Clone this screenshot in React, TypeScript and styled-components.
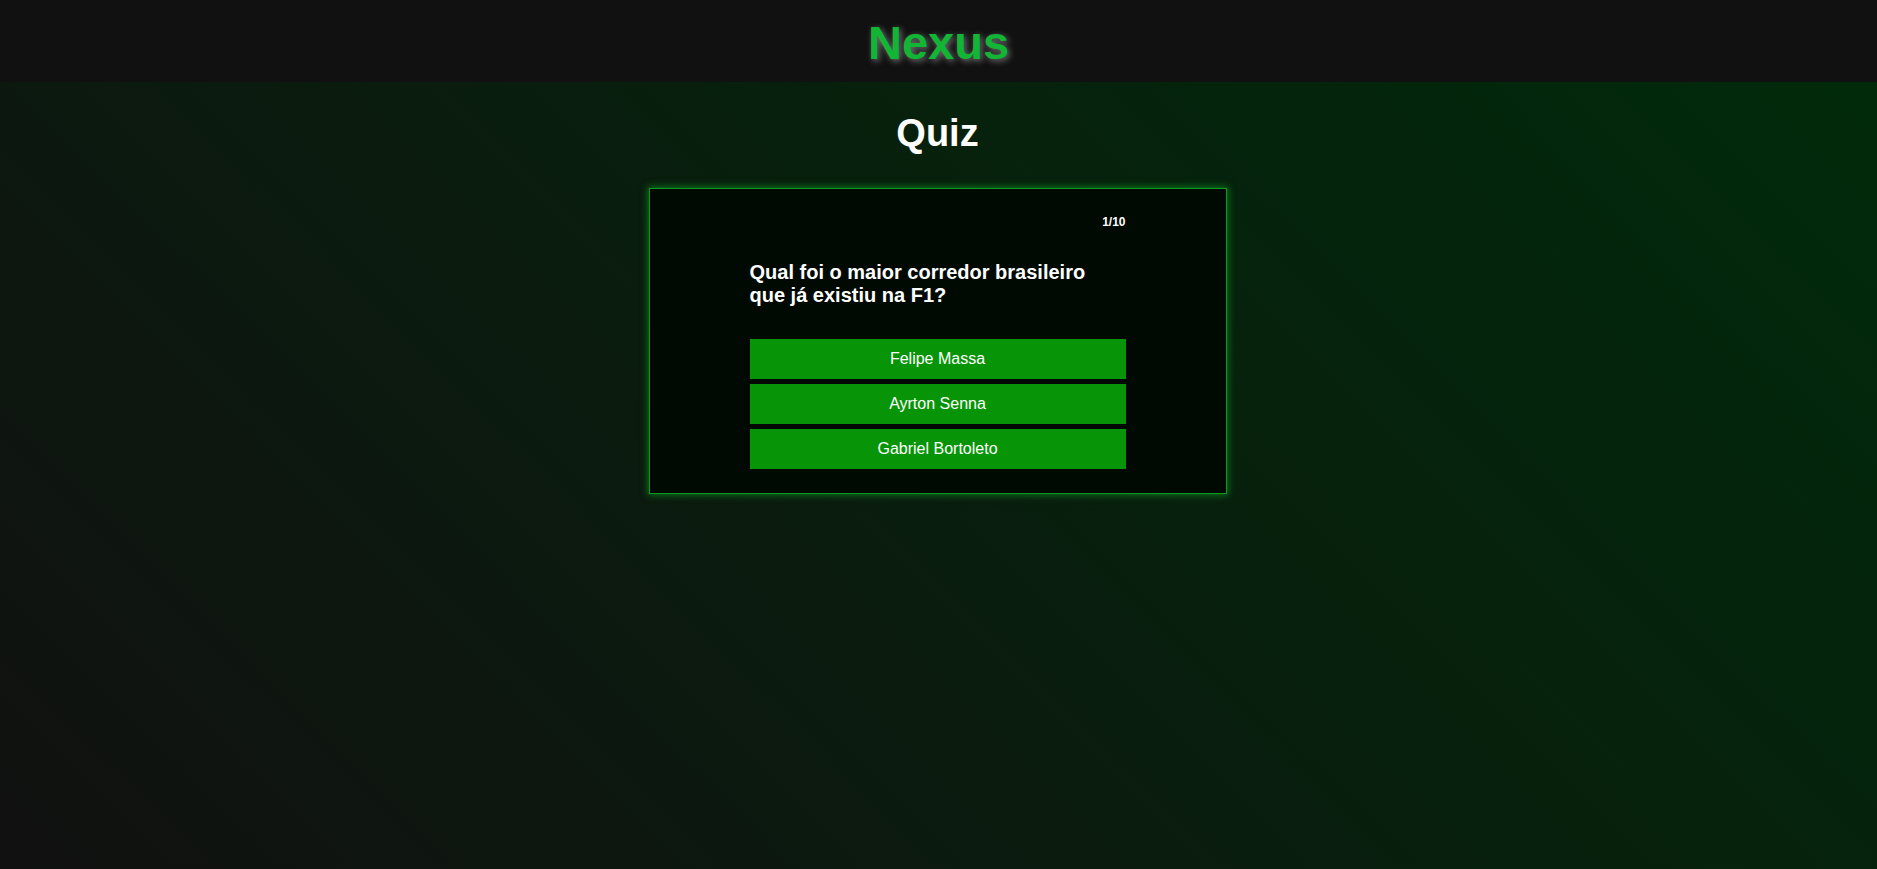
import React from "react";
import styled, { createGlobalStyle } from "styled-components";

const GlobalStyle = createGlobalStyle`
  html, body {
    margin: 0;
    padding: 0;
  }
  body {
    font-family: "Liberation Sans", Arial, sans-serif;
    background: #111111;
  }
  * { box-sizing: border-box; }
`;

const Page = styled.div`
  min-height: 100vh;
  display: flex;
  flex-direction: column;
  background: linear-gradient(45deg, #111111 0%, #002b0a 100%);
`;

const Header = styled.header`
  height: 82px;
  flex-shrink: 0;
  display: flex;
  align-items: center;
  justify-content: center;
  background: #111111;
`;

const Logo = styled.h1`
  margin: 2px 0 0;
  font-size: 47px;
  font-weight: 700;
  color: #12b534;
  text-shadow: 2px 2px 6px rgba(200, 200, 200, 0.55);
`;

const Main = styled.main`
  flex: 1;
  display: flex;
  flex-direction: column;
  align-items: center;
  padding-top: 30px;
  padding-right: 2px;
`;

const Title = styled.h2`
  margin: 0 0 33px;
  font-size: 38px;
  font-weight: 700;
  color: #ffffff;
`;

const Card = styled.section`
  width: 578px;
  padding: 26px 100px 24px;
  border: 1px solid #0e9a1f;
  background: #000a03;
  box-shadow: 0 0 7px 1px rgba(14, 150, 35, 0.75);
  display: flex;
  flex-direction: column;
`;

const Counter = styled.div`
  align-self: flex-end;
  font-size: 12px;
  line-height: 14px;
  font-weight: 700;
  color: #ffffff;
`;

const Question = styled.h3`
  margin: 32px 0 32px;
  font-size: 20px;
  font-weight: 700;
  color: #ffffff;
`;

const Options = styled.div`
  display: flex;
  flex-direction: column;
  gap: 5px;
`;

const Option = styled.button`
  height: 40px;
  border: none;
  background: #079407;
  color: #ffffff;
  font-family: "Liberation Sans", Arial, sans-serif;
  font-size: 16px;
  cursor: pointer;
  padding: 0;
`;

const options = ["Felipe Massa", "Ayrton Senna", "Gabriel Bortoleto"];

export default function App() {
  return (
    <>
      <GlobalStyle />
      <Page>
        <Header>
          <Logo>Nexus</Logo>
        </Header>
        <Main>
          <Title>Quiz</Title>
          <Card>
            <Counter>1/10</Counter>
            <Question>Qual foi o maior corredor brasileiro que já existiu na F1?</Question>
            <Options>
              {options.map((o) => (
                <Option key={o}>{o}</Option>
              ))}
            </Options>
          </Card>
        </Main>
      </Page>
    </>
  );
}
